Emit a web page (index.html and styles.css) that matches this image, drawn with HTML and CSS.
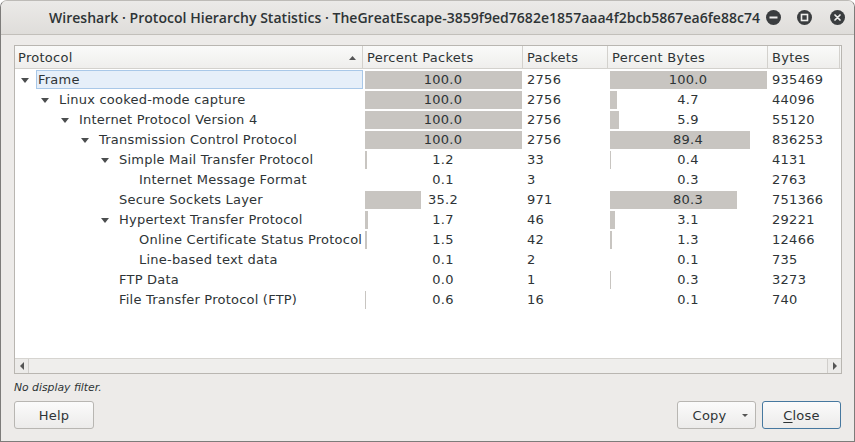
FILE: index.html
```html
<!DOCTYPE html>
<html>
<head>
<meta charset="utf-8">
<link rel="stylesheet" href="styles.css">
</head>
<body>
<div class="window">
  <div class="titlebar">
    <span class="title">Wireshark · Protocol Hierarchy Statistics · TheGreatEscape-3859f9ed7682e1857aaa4f2bcb5867ea6fe88c74</span>
    <div class="wm">
      <span class="wm-btn"><svg width="15" height="15" viewBox="0 0 15 15"><circle cx="7.5" cy="7.5" r="7.5" fill="#3a3d3f"/><rect x="3.5" y="6.5" width="8" height="2" fill="#eeeeec"/></svg></span>
      <span class="wm-btn"><svg width="15" height="15" viewBox="0 0 15 15"><circle cx="7.5" cy="7.5" r="7.5" fill="#3a3d3f"/><rect x="4.5" y="4.5" width="6" height="6" fill="none" stroke="#eeeeec" stroke-width="1.6"/></svg></span>
      <span class="wm-btn"><svg width="15" height="15" viewBox="0 0 15 15"><circle cx="7.5" cy="7.5" r="7.5" fill="#3a3d3f"/><path d="M5 5 L10 10 M10 5 L5 10" stroke="#eeeeec" stroke-width="1.7" stroke-linecap="round"/></svg></span>
    </div>
  </div>
  <div class="content">
    <div class="tree">
      <div class="header">
        <div class="hcell hproto"><span>Protocol</span><svg class="sort" width="7" height="4" viewBox="0 0 7 4"><path d="M0 4 L3.5 0 L7 4 Z" fill="#555"/></svg></div>
        <div class="hcell">Percent Packets</div>
        <div class="hcell">Packets</div>
        <div class="hcell">Percent Bytes</div>
        <div class="hcell">Bytes</div>
        <div class="hfill"></div>
      </div>
      <div class="rows">
        <div class="row">
          <div class="proto d0"><span class="exp"><i class="tri"></i></span><span class="label selected">Frame</span></div>
          <div class="pct"><span class="fill" style="width:157px"></span><span class="val">100.0</span></div>
          <div class="num">2756</div>
          <div class="pct"><span class="fill" style="width:157px"></span><span class="val">100.0</span></div>
          <div class="num">935469</div>
        </div>
        <div class="row">
          <div class="proto d1"><span class="exp"><i class="tri"></i></span><span class="label">Linux cooked-mode capture</span></div>
          <div class="pct"><span class="fill" style="width:157px"></span><span class="val">100.0</span></div>
          <div class="num">2756</div>
          <div class="pct"><span class="fill" style="width:7px"></span><span class="val">4.7</span></div>
          <div class="num">44096</div>
        </div>
        <div class="row">
          <div class="proto d2"><span class="exp"><i class="tri"></i></span><span class="label">Internet Protocol Version 4</span></div>
          <div class="pct"><span class="fill" style="width:157px"></span><span class="val">100.0</span></div>
          <div class="num">2756</div>
          <div class="pct"><span class="fill" style="width:9px"></span><span class="val">5.9</span></div>
          <div class="num">55120</div>
        </div>
        <div class="row">
          <div class="proto d3"><span class="exp"><i class="tri"></i></span><span class="label">Transmission Control Protocol</span></div>
          <div class="pct"><span class="fill" style="width:157px"></span><span class="val">100.0</span></div>
          <div class="num">2756</div>
          <div class="pct"><span class="fill" style="width:140px"></span><span class="val">89.4</span></div>
          <div class="num">836253</div>
        </div>
        <div class="row">
          <div class="proto d4"><span class="exp"><i class="tri"></i></span><span class="label">Simple Mail Transfer Protocol</span></div>
          <div class="pct"><span class="fill" style="width:2px"></span><span class="val">1.2</span></div>
          <div class="num">33</div>
          <div class="pct"><span class="fill" style="width:1px"></span><span class="val">0.4</span></div>
          <div class="num">4131</div>
        </div>
        <div class="row">
          <div class="proto d5"><span class="exp"></span><span class="label">Internet Message Format</span></div>
          <div class="pct"><span class="fill" style="width:0px"></span><span class="val">0.1</span></div>
          <div class="num">3</div>
          <div class="pct"><span class="fill" style="width:0px"></span><span class="val">0.3</span></div>
          <div class="num">2763</div>
        </div>
        <div class="row">
          <div class="proto d4"><span class="exp"></span><span class="label">Secure Sockets Layer</span></div>
          <div class="pct"><span class="fill" style="width:56px"></span><span class="val">35.2</span></div>
          <div class="num">971</div>
          <div class="pct"><span class="fill" style="width:127px"></span><span class="val">80.3</span></div>
          <div class="num">751366</div>
        </div>
        <div class="row">
          <div class="proto d4"><span class="exp"><i class="tri"></i></span><span class="label">Hypertext Transfer Protocol</span></div>
          <div class="pct"><span class="fill" style="width:3px"></span><span class="val">1.7</span></div>
          <div class="num">46</div>
          <div class="pct"><span class="fill" style="width:5px"></span><span class="val">3.1</span></div>
          <div class="num">29221</div>
        </div>
        <div class="row">
          <div class="proto d5"><span class="exp"></span><span class="label">Online Certificate Status Protocol</span></div>
          <div class="pct"><span class="fill" style="width:2px"></span><span class="val">1.5</span></div>
          <div class="num">42</div>
          <div class="pct"><span class="fill" style="width:2px"></span><span class="val">1.3</span></div>
          <div class="num">12466</div>
        </div>
        <div class="row">
          <div class="proto d5"><span class="exp"></span><span class="label">Line-based text data</span></div>
          <div class="pct"><span class="fill" style="width:0px"></span><span class="val">0.1</span></div>
          <div class="num">2</div>
          <div class="pct"><span class="fill" style="width:0px"></span><span class="val">0.1</span></div>
          <div class="num">735</div>
        </div>
        <div class="row">
          <div class="proto d4"><span class="exp"></span><span class="label">FTP Data</span></div>
          <div class="pct"><span class="fill" style="width:0px"></span><span class="val">0.0</span></div>
          <div class="num">1</div>
          <div class="pct"><span class="fill" style="width:1px"></span><span class="val">0.3</span></div>
          <div class="num">3273</div>
        </div>
        <div class="row">
          <div class="proto d4"><span class="exp"></span><span class="label">File Transfer Protocol (FTP)</span></div>
          <div class="pct"><span class="fill" style="width:1px"></span><span class="val">0.6</span></div>
          <div class="num">16</div>
          <div class="pct"><span class="fill" style="width:0px"></span><span class="val">0.1</span></div>
          <div class="num">740</div>
        </div>
      </div>
      <div class="hscroll">
        <span class="sbtn left"><i class="tri-l"></i></span>
        <span class="trough"></span>
        <span class="sbtn right"><i class="tri-r"></i></span>
      </div>
    </div>
    <div class="filter">No display filter.</div>
    <div class="buttons">
      <button class="btn help">Help</button>
      <span class="spacer"></span>
      <button class="btn copy"><span>Copy</span><i class="tri-d"></i></button>
      <button class="btn close"><u>C</u>lose</button>
    </div>
  </div>
</div>
</body>
</html>
```
FILE: styles.css
```css
* { box-sizing: border-box; }
html, body { margin: 0; padding: 0; background: #ffffff; }
body {
  width: 855px;
  height: 442px;
  overflow: hidden;
  font-family: "DejaVu Sans", sans-serif;
  font-size: 13px;
  color: #2e3436;
}
.window {
  width: 855px;
  height: 442px;
  display: flex;
  flex-direction: column;
  border: 1px solid #7d7c7a;
  border-top-color: #bdbbb7;
  border-radius: 7px 7px 0 0;
  background: #edebe9;
  overflow: hidden;
}
.titlebar {
  height: 34px;
  flex: none;
  display: flex;
  align-items: center;
  justify-content: flex-end;
  padding-right: 9px;
  background: linear-gradient(#ebeae8, #dfddda);
  border-bottom: 1px solid #c2bfba;
}
.title {
  font-family: "Open Sans", sans-serif;
  font-weight: 600;
  font-size: 14px;
  letter-spacing: 0.03px;
  color: #2e3436;
  white-space: nowrap;
  margin-right: 6px;
}
.wm { display: flex; align-items: center; }
.wm-btn { display: flex; width: 15px; height: 15px; }
.wm-btn + .wm-btn { margin-left: 16px; }
.wm-btn:last-child { margin-left: 18px; }

.content {
  flex: 1;
  display: flex;
  flex-direction: column;
  padding: 10px 12px 0 13px;
}
.tree {
  height: 329px;
  flex: none;
  display: flex;
  flex-direction: column;
  border: 1px solid #b9b6b1;
  background: #ffffff;
  letter-spacing: 0.22px;
}
.header, .row {
  display: grid;
  grid-template-columns: 348px 160px 85px 160px 72px 1fr;
}
.header {
  height: 23px;
  flex: none;
  background: linear-gradient(#fafaf9, #efeeec);
  border-bottom: 1px solid #d3d1cd;
  letter-spacing: 0.28px;
}
.hcell {
  display: flex;
  align-items: center;
  padding-left: 4px;
  padding-top: 1px;
  border-right: 1px solid #d3d1cd;
  white-space: nowrap;
  line-height: 21px;
}
.hproto { padding-left: 3px; justify-content: space-between; padding-right: 6px; }
.sort { display: block; }

.rows { flex: 1; }
.row { height: 20px; }
.proto {
  display: flex;
  align-items: stretch;
  white-space: nowrap;
}
.d1 { padding-left: 20px; }
.d2 { padding-left: 40px; }
.d3 { padding-left: 60px; }
.d4 { padding-left: 80px; }
.d5 { padding-left: 100px; }
.exp {
  width: 21px;
  flex: none;
  display: flex;
  align-items: center;
  justify-content: center;
  padding-top: 1px;
}
.tri {
  display: block;
  width: 0;
  height: 0;
  border-left: 4px solid transparent;
  border-right: 4px solid transparent;
  border-top: 5px solid #4b4d4f;
  margin-left: -1px;
}
.label {
  flex: 1;
  padding-left: 2px;
  line-height: 18px;
  margin-top: 1px;
  height: 19px;
  border: 1px solid transparent;
}
.label.selected {
  background: #e6eff9;
  border-color: #a9c8e8;
  padding-left: 1px;
}
.pct {
  display: grid;
  align-items: center;
}
.pct > * { grid-area: 1 / 1; }
.fill {
  justify-self: start;
  height: 18px;
  margin-left: 2px;
  background: #c8c5c1;
}
.val {
  justify-self: center;
  line-height: 20px;
  padding-top: 1px;
  letter-spacing: 0.28px;
}
.num {
  padding-left: 4px;
  line-height: 20px;
  padding-top: 1px;
  letter-spacing: 0.28px;
}

.hscroll {
  height: 15px;
  flex: none;
  display: flex;
  border-top: 1px solid #d6d4d0;
  background: #ecebe9;
}
.sbtn {
  width: 14px;
  flex: none;
  display: flex;
  align-items: center;
  justify-content: center;
}
.sbtn.left { border-right: 1px solid #d0cecb; }
.sbtn.right { border-left: 1px solid #d0cecb; }
.trough { flex: 1; background: #efeeec; }
.tri-l {
  display: block; width: 0; height: 0;
  border-top: 4px solid transparent;
  border-bottom: 4px solid transparent;
  border-right: 4px solid #555;
}
.tri-r {
  display: block; width: 0; height: 0;
  border-top: 4px solid transparent;
  border-bottom: 4px solid transparent;
  border-left: 4px solid #555;
}

.filter {
  margin-top: 5px;
  line-height: 18px;
  font-size: 10.8px;
  font-style: italic;
  color: #2e3436;
}
.buttons {
  display: flex;
  margin-top: 4px;
  margin-right: 1px;
}
.spacer { flex: 1; }
.btn {
  height: 28px;
  padding: 0;
  font-family: "DejaVu Sans", sans-serif;
  font-size: 13px;
  letter-spacing: 0.2px;
  color: #2e3436;
  border: 1px solid #b8b6b2;
  border-radius: 3px;
  background: linear-gradient(#fbfbfb, #ecebea);
  display: flex;
  align-items: center;
  justify-content: center;
}
.help { width: 80px; }
.copy { width: 79px; padding-left: 2px; }
.copy span { margin-left: 6px; margin-right: 16px; }
.tri-d {
  display: block; width: 0; height: 0;
  border-left: 3px solid transparent;
  border-right: 3px solid transparent;
  border-top: 3px solid #555;
}
.close {
  width: 79px;
  margin-left: 6px;
  border-color: #46789f;
}
.close u { text-decoration-thickness: 1px; text-underline-offset: 2px; }
```
